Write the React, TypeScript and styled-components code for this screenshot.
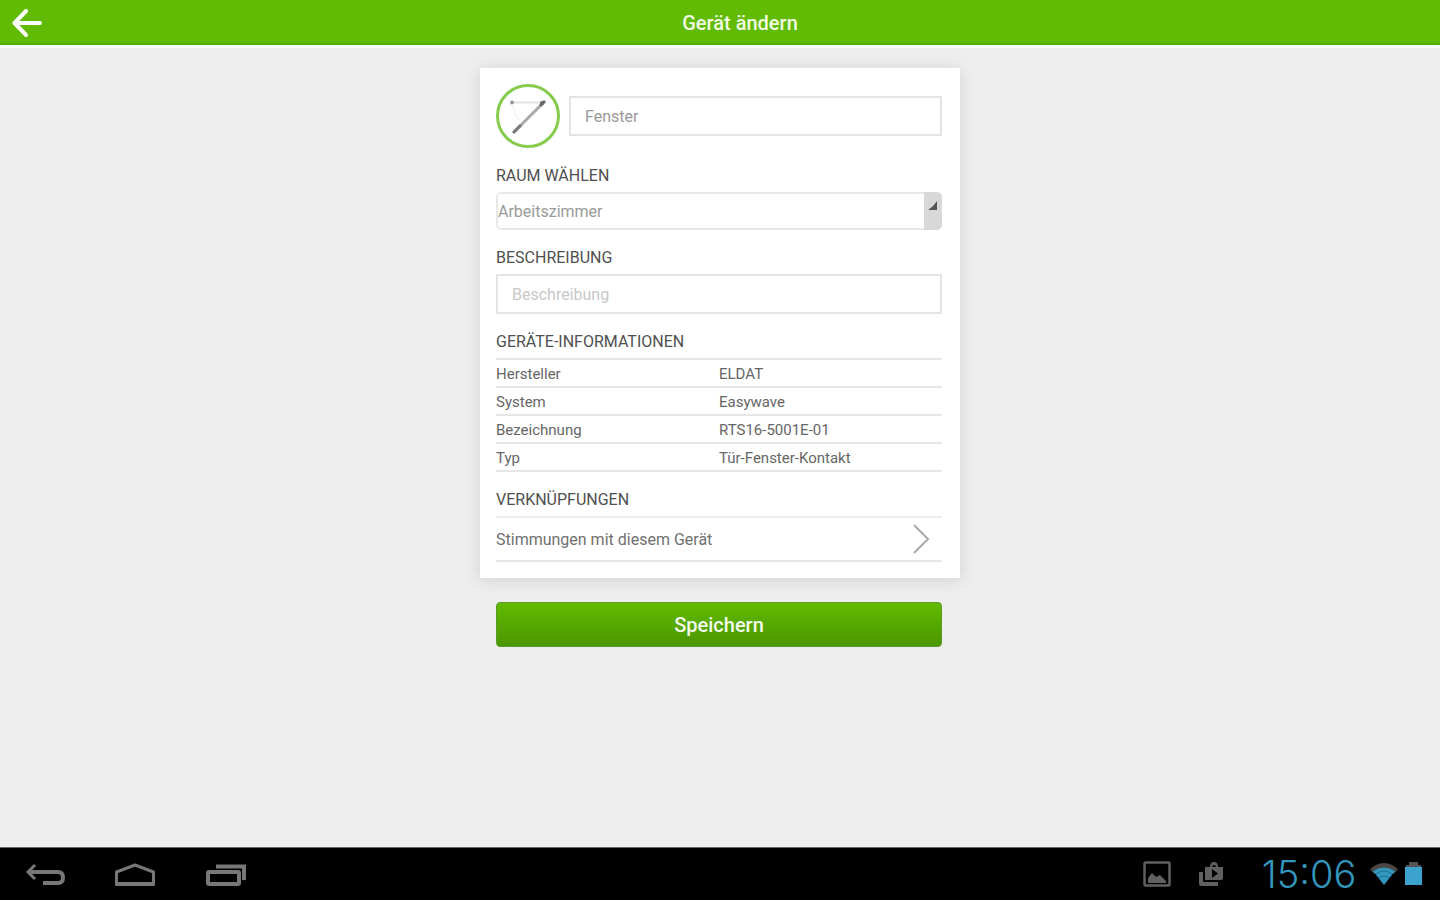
import React from "react";
import styled, { createGlobalStyle } from "styled-components";

const GlobalStyle = createGlobalStyle`
  *, *::before, *::after { box-sizing: border-box; }
  body {
    margin: 0;
    background: #eee;
    color: #666;
    font-family: Roboto, "Noto Sans", sans-serif;
  }
  button, input, select { font-family: inherit; }
`;

const Screen = styled.div`
  display: flex;
  flex-direction: column;
  min-height: 100vh;
`;

const Header = styled.header`
  display: flex;
  align-items: center;
  height: 48px;
  padding-right: 4px;
  background: #61bb04;
  border-bottom: 3px solid #fafafa;
  box-shadow: inset 0 -2px 0 #4fb000;
`;

const BackButton = styled.button`
  display: flex;
  flex: none;
  width: 44px;
  padding: 0 0 0 12px;
  border: 0;
  background: none;
  color: #fff;
  cursor: pointer;
`;

const Title = styled.h1`
  flex: 1;
  margin: 0;
  color: #f1fbe4;
  font-size: 20px;
  font-weight: 500;
  line-height: 24px;
  text-align: center;
`;

const Main = styled.main`
  flex: 1;
  padding: 20px 0 24px;
`;

const Form = styled.form`
  width: 100%;
  max-width: 480px;
  margin: 0 auto;
`;

const Card = styled.div`
  padding: 16px 18px 16px 16px;
  background: #fff;
  box-shadow: 0 2px 16px rgba(0, 0, 0, 0.12);
`;

const DeviceRow = styled.div`
  display: flex;
  align-items: center;
  gap: 9px;
  height: 64px;
`;

const DeviceIcon = styled.button`
  display: flex;
  flex: none;
  width: 64px;
  height: 64px;
  padding: 0;
  border: 3px solid #86cb4c;
  border-radius: 50%;
  background: #fff;
`;

const TextInput = styled.input`
  display: block;
  width: 100%;
  min-width: 0;
  height: 40px;
  padding: 0 14px;
  border: 2px solid #e4e4e4;
  border-radius: 0;
  background: #fff;
  color: #999;
  font-size: 16px;
  outline: none;
  &::placeholder { color: #c8c8c8; opacity: 1; }
`;

const SectionTitle = styled.h2`
  margin: 16px 0 4px;
  color: #505050;
  font-size: 16px;
  font-weight: 400;
  line-height: 24px;
`;

const SelectBox = styled.div`
  display: grid;
  grid-template-columns: 1fr 18px;
  height: 38px;
  overflow: hidden;
  border-radius: 5px;
`;

const Select = styled.select`
  grid-area: 1 / 1 / 2 / 3;
  appearance: none;
  min-width: 0;
  padding: 0 20px 0 0;
  border: 2px solid #e8e8e8;
  border-radius: 5px;
  background: #fff;
  color: #999;
  font-size: 16px;
  outline: none;
`;

const SelectHandle = styled.span`
  grid-area: 1 / 2;
  z-index: 1;
  padding: 9px 0 0 4px;
  background: #d8d8d8;
  line-height: 0;
  pointer-events: none;
`;

const InfoTable = styled.table`
  width: 100%;
  border-collapse: separate;
  border-spacing: 0;
  border-top: 2px solid #e6e6e6;
  table-layout: fixed;
`;

const InfoCell = styled.td`
  width: 50%;
  height: 28px;
  padding: 2px 0 0;
  border-bottom: 2px solid #e6e6e6;
  font-size: 15px;
  font-weight: 400;
  line-height: 20px;
  text-align: left;
`;

const LinkRow = styled.a`
  display: flex;
  align-items: center;
  justify-content: space-between;
  height: 46px;
  padding-right: 12px;
  border-top: 2px solid #ececec;
  border-bottom: 2px solid #e6e6e6;
  color: #707070;
  font-size: 16px;
  text-decoration: none;
`;

const ButtonBar = styled.div`
  padding: 24px 18px 0 16px;
`;

const SaveButton = styled.button`
  display: block;
  width: 100%;
  height: 45px;
  border: 1px solid #5a9a28;
  border-radius: 4px;
  background: linear-gradient(#61bb00, #4b9600);
  color: #f4fbec;
  font-size: 20px;
  font-weight: 500;
  cursor: pointer;
`;

const SystemBar = styled.footer`
  display: flex;
  align-items: center;
  justify-content: space-between;
  height: 53px;
  padding: 0 18px 0 24px;
  border-top: 1px solid #666;
  background: #000;
`;

const NavKeys = styled.nav`
  display: flex;
  gap: 46px;
  padding-top: 4px;
`;

const NavKey = styled.button`
  display: flex;
  padding: 0;
  border: 0;
  background: none;
  color: #777;
  cursor: pointer;
`;

const Status = styled.div`
  display: flex;
  align-items: center;
`;

const Notices = styled.div`
  display: flex;
  gap: 27px;
  margin-right: 30px;
  color: #606060;
`;

const Clock = styled.time`
  min-width: 110px;
  color: #3296bd;
  font-family: Inter, sans-serif;
  font-size: 38px;
  font-weight: 300;
  line-height: 40px;
  text-align: center;
`;

const Indicators = styled.div`
  display: flex;
  gap: 7px;
  margin-left: 6px;
`;

const deviceInfo = [
  ["Hersteller", "ELDAT"],
  ["System", "Easywave"],
  ["Bezeichnung", "RTS16-5001E-01"],
  ["Typ", "Tür-Fenster-Kontakt"],
];

const ArrowLeft = () => (
  <svg width="32" height="28" viewBox="0 0 32 28" fill="none" stroke="currentColor" strokeWidth="4">
    <path d="M28 14H3M14 2 2.500 14 14 26" strokeLinecap="round" strokeLinejoin="round" />
  </svg>
);

const WindowContact = () => (
  <svg width="58" height="58" viewBox="0 0 58 58" fill="none">
    <path d="M13 15.500H42" stroke="#e2e2e2" strokeWidth="2" />
    <path d="M14 18Q15 27 20 33" stroke="#eee" />
    <path d="M15 45 46 14" stroke="#aaa" strokeWidth="3" />
    <path d="m14 46 8-8M41 19l5-5" stroke="#777" strokeWidth="3" />
    <circle cx="13" cy="15.500" r="2" fill="#999" />
    <circle cx="43" cy="16" r="2" fill="#666" />
  </svg>
);

const BackKey = () => (
  <svg width="42" height="26" viewBox="0 0 42 26" fill="none" stroke="currentColor">
    <path d="M5 9H34Q39 9 39 14.500T34 20H19" strokeWidth="4" />
    <path d="M11 2 4 9l7 7" strokeWidth="3" />
  </svg>
);

const HomeKey = () => (
  <svg width="46" height="26" viewBox="0 0 46 26" fill="none" stroke="currentColor" strokeWidth="3">
    <path d="M4.500 21.500V9L23 2 41.500 9V21.500Z" strokeLinejoin="round" />
    <path d="M4 21H42" strokeWidth="4" />
  </svg>
);

const RecentKey = () => (
  <svg width="44" height="26" viewBox="0 0 44 26" fill="none" stroke="currentColor">
    <rect x="4" y="9" width="31" height="12" rx="1" strokeWidth="4" />
    <path d="M12 3.500H40V17" strokeWidth="4" />
  </svg>
);

const PictureIcon = () => (
  <svg width="28" height="26" viewBox="0 0 28 26">
    <rect x="1.500" y="1.500" width="25" height="23" rx="1" fill="none" stroke="currentColor" strokeWidth="2.500" />
    <path d="M5 22v-5l4-5 4 4 4-2 6 6v2Z" fill="currentColor" />
  </svg>
);

const StoreIcon = () => (
  <svg width="26" height="26" viewBox="0 0 26 26">
    <path d="M3 11v12h17" fill="none" stroke="currentColor" strokeWidth="4" strokeLinejoin="round" />
    <path d="M7 6h5q0-5 4-5t4 5h5v11q0 2-3 2H7Z" fill="currentColor" />
    <path d="M14 6q0-2 2-2t2 2Z" fill="#000" />
    <path d="m14 8 6 4.500-6 4.500Z" fill="#000" />
  </svg>
);

const WifiIcon = () => (
  <svg width="28" height="26" viewBox="0 0 28 26">
    <path d="M0 8Q14-4 28 8l-4 5Q14 4 4 13Z" fill="#4c4848" />
    <path d="M3 10Q14 3 25 10L14 24Z" fill="#3296bd" />
    <path d="M6 13Q14 7 22 13M9 17q5-4 10 0" fill="none" stroke="#1f7494" />
  </svg>
);

const BatteryIcon = () => (
  <svg width="17" height="26" viewBox="0 0 17 26">
    <path d="M1 4h3V1h9v3h3v3H1Z" fill="#555" />
    <path d="M0 6h17v18H0Z" fill="#3ba3cd" />
  </svg>
);

export default function App() {
  return (
    <>
      <GlobalStyle />
      <Screen>
        <Header>
          <BackButton type="button" aria-label="Zurück"><ArrowLeft /></BackButton>
          <Title>Gerät ändern</Title>
        </Header>

        <Main>
          <Form onSubmit={(e: React.FormEvent) => e.preventDefault()}>
            <Card>
              <DeviceRow>
                <DeviceIcon type="button" aria-label="Symbol wählen"><WindowContact /></DeviceIcon>
                <TextInput aria-label="Name" defaultValue="Fenster" />
              </DeviceRow>

              <SectionTitle><label htmlFor="room">RAUM WÄHLEN</label></SectionTitle>
              <SelectBox>
                <Select id="room" defaultValue="Arbeitszimmer">
                  <option>Arbeitszimmer</option>
                </Select>
                <SelectHandle>
                  <svg width="9" height="9" viewBox="0 0 8 8"><path d="M8 0V8H0Q5 5 8 0Z" fill="#555" /></svg>
                </SelectHandle>
              </SelectBox>

              <SectionTitle><label htmlFor="description">BESCHREIBUNG</label></SectionTitle>
              <TextInput id="description" placeholder="Beschreibung" />

              <SectionTitle>GERÄTE-INFORMATIONEN</SectionTitle>
              <InfoTable>
                <tbody>
                  {deviceInfo.map(([name, value]) => (
                    <tr key={name}>
                      <InfoCell as="th" scope="row">{name}</InfoCell>
                      <InfoCell>{value}</InfoCell>
                    </tr>
                  ))}
                </tbody>
              </InfoTable>

              <SectionTitle>VERKNÜPFUNGEN</SectionTitle>
              <LinkRow href="#stimmungen">
                Stimmungen mit diesem Gerät
                <svg width="18" height="30" viewBox="0 0 18 30" fill="none" stroke="#aaa" strokeWidth="2">
                  <path d="m2 1 14 14L2 29" />
                </svg>
              </LinkRow>
            </Card>
            <ButtonBar>
              <SaveButton type="submit">Speichern</SaveButton>
            </ButtonBar>
          </Form>
        </Main>

        <SystemBar>
          <NavKeys aria-label="System">
            <NavKey type="button" aria-label="Zurück"><BackKey /></NavKey>
            <NavKey type="button" aria-label="Startseite"><HomeKey /></NavKey>
            <NavKey type="button" aria-label="Letzte Apps"><RecentKey /></NavKey>
          </NavKeys>
          <Status>
            <Notices><PictureIcon /><StoreIcon /></Notices>
            <Clock dateTime="15:06">15:06</Clock>
            <Indicators><WifiIcon /><BatteryIcon /></Indicators>
          </Status>
        </SystemBar>
      </Screen>
    </>
  );
}
